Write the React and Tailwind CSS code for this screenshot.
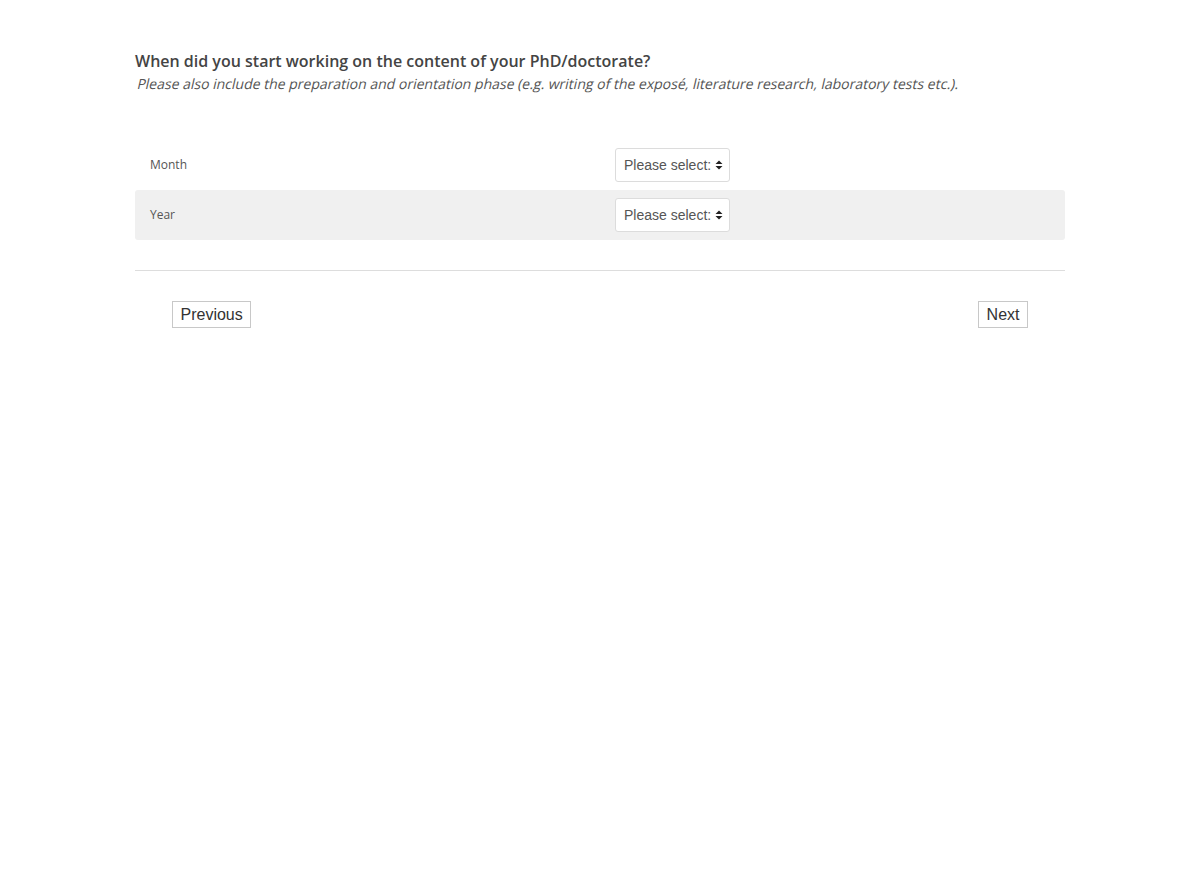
import { useState } from "react";

const rows = [
  { id: "month", label: "Month" },
  { id: "year", label: "Year" },
];

const Caret = () => (
  <svg width="8" height="10" viewBox="0 0 8 10" className="shrink-0">
    <path d="M4 0.5 L7.5 4 H0.5 Z M4 9.5 L7.5 6 H0.5 Z" fill="#222" />
  </svg>
);

const FakeSelect = () => (
  <button
    type="button"
    className="flex h-[34px] w-[115px] items-center gap-[4px] rounded-[3px] border border-[#dcdcdc] bg-white pl-[8px] pr-[6px] text-[14px] text-[#555] font-['Liberation_Sans',Arial,sans-serif]"
  >
    <span className="whitespace-nowrap">Please select:</span>
    <Caret />
  </button>
);

export default function App() {
  const [answers] = useState({});

  return (
    <div className="min-h-screen bg-white font-['Open_Sans',sans-serif] text-[#444]">
      <div className="mx-auto w-[930px] pt-[50px]">
        <h2 className="text-[16px] font-semibold leading-[22px] text-[#444]">
          When did you start working on the content of your PhD/doctorate?
        </h2>
        {/* regular face slanted, like the browser's synthetic oblique */}
        <p className="leading-[22px]">
          <span className="inline-block origin-bottom-left -skew-x-[13deg] pt-px text-[14px] text-[#555]">
            Please also include the preparation and orientation phase (e.g. writing of the exposé, literature research, laboratory tests etc.).
          </span>
        </p>

        <div className="mt-[45px]">
          {rows.map((r, i) => (
            <div
              key={r.id}
              className={
                "flex h-[50px] items-center rounded-[3px] " +
                (i % 2 === 1 ? "bg-[#f0f0f0]" : "bg-white")
              }
            >
              <div className="w-[480px] pl-[15px] text-[12px] text-[#555]">{r.label}</div>
              <FakeSelect value={answers[r.id]} />
            </div>
          ))}
        </div>

        <hr className="mt-[30px] border-t border-[#dddddd]" />

        <div className="flex justify-between px-[37px] pt-[30px] font-['Liberation_Sans',Arial,sans-serif]">
          <button className="h-[27px] border border-[#c8c8c8] bg-white px-[7.5px] text-[16px] text-[#333]">
            Previous
          </button>
          <button className="h-[27px] border border-[#c8c8c8] bg-white px-[7.5px] text-[16px] text-[#333]">
            Next
          </button>
        </div>
      </div>
    </div>
  );
}
